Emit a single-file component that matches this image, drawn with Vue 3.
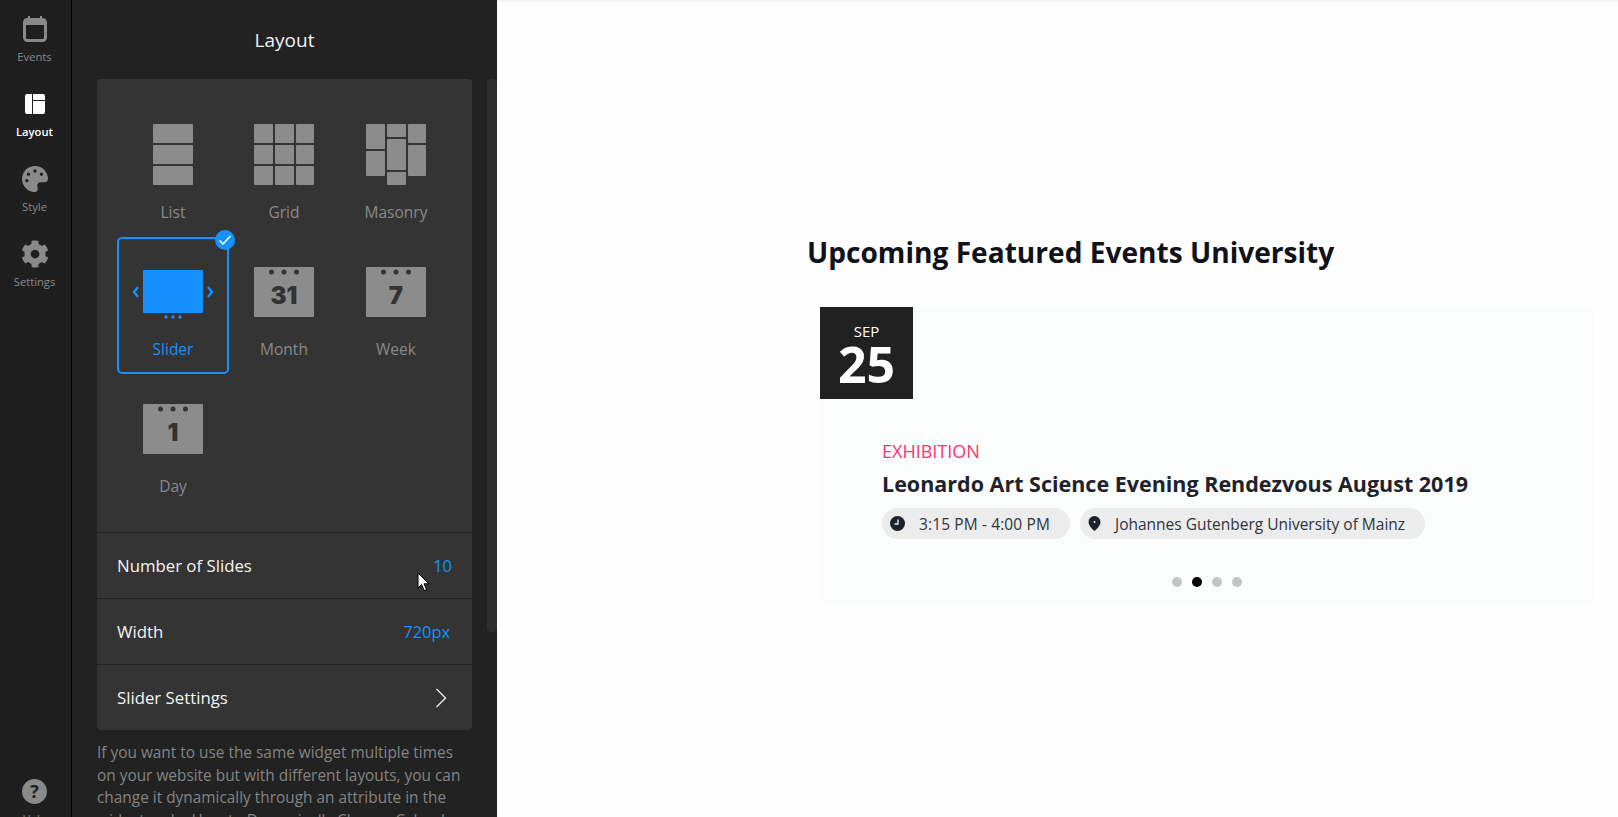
<template>
  <div class="app">
    <aside class="sidebar">
      <div v-for="item in navItems" :key="item.label" class="nav-item" :class="{ active: item.active }">
        <span class="nav-icon">
          <svg v-if="item.icon === 'events'" width="24" height="26" viewBox="0 0 24 26">
            <path d="M5 0h2v4H5zM17 0h2v4h-2z" fill="#8a8a8a" />
            <rect x="1.5" y="3.5" width="21" height="21" rx="3" fill="none" stroke="#8a8a8a" stroke-width="3" />
            <rect x="1" y="3" width="22" height="6" rx="2" fill="#8a8a8a" />
          </svg>
          <svg v-else-if="item.icon === 'layout'" width="20" height="20" viewBox="0 0 20 20">
            <path d="M2 0h5v20H2a2 2 0 0 1-2-2V2a2 2 0 0 1 2-2zM8 0h10a2 2 0 0 1 2 2v4H8zM8 7h12v11a2 2 0 0 1-2 2H8z" fill="#fff" />
          </svg>
          <svg v-else-if="item.icon === 'style'" width="26" height="26" viewBox="0 0 512 512">
            <path fill="#8a8a8a" d="M204.3 5C104.9 24.4 24.8 104.3 5.2 203.4c-37 187 131.7 326.4 258.8 306.7 41.2-6.4 61.4-54.6 42.5-91.7-23.1-45.4 9.9-98.4 60.9-98.4h79.7c35.8 0 64.8-29.6 64.9-65.3C511.5 97.1 368.1-26.9 204.3 5zM96 320c-17.7 0-32-14.3-32-32s14.3-32 32-32 32 14.3 32 32-14.3 32-32 32zm32-128c-17.7 0-32-14.3-32-32s14.3-32 32-32 32 14.3 32 32-14.3 32-32 32zm128-64c-17.7 0-32-14.3-32-32s14.3-32 32-32 32 14.3 32 32-14.3 32-32 32zm128 64c-17.7 0-32-14.3-32-32s14.3-32 32-32 32 14.3 32 32-14.3 32-32 32z" />
          </svg>
          <svg v-else-if="item.icon === 'settings'" width="28" height="28" viewBox="0 0 512 512">
            <path fill="#8a8a8a" d="M487.4 315.7l-42.6-24.6c4.3-23.2 4.3-47 0-70.2l42.6-24.6c4.9-2.8 7.1-8.6 5.5-14-11.1-35.6-30-67.8-54.7-94.6-3.8-4.1-10-5.1-14.8-2.3L380.8 110c-17.9-15.4-38.5-27.3-60.8-35.1V25.8c0-5.6-3.9-10.5-9.4-11.7-36.7-8.2-74.3-7.8-109.2 0-5.5 1.2-9.4 6.1-9.4 11.7V75c-22.2 7.9-42.8 19.8-60.8 35.1L88.7 85.5c-4.9-2.8-11-1.9-14.8 2.3-24.7 26.7-43.6 58.9-54.7 94.6-1.7 5.4.6 11.2 5.5 14L67.3 221c-4.3 23.2-4.3 47 0 70.2l-42.6 24.6c-4.9 2.8-7.1 8.6-5.5 14 11.1 35.6 30 67.8 54.7 94.6 3.8 4.1 10 5.1 14.8 2.3l42.6-24.6c17.9 15.4 38.5 27.3 60.8 35.1v49.2c0 5.6 3.9 10.5 9.4 11.7 36.7 8.2 74.3 7.8 109.2 0 5.5-1.2 9.4-6.1 9.4-11.7v-49.2c22.2-7.9 42.8-19.8 60.8-35.1l42.6 24.6c4.9 2.8 11 1.9 14.8-2.3 24.7-26.7 43.6-58.9 54.7-94.6 1.5-5.5-.7-11.3-5.6-14.1zM256 336c-44.1 0-80-35.9-80-80s35.9-80 80-80 80 35.9 80 80-35.9 80-80 80z" />
          </svg>
        </span>
        <span class="nav-label">{{ item.label }}</span>
      </div>
      <div class="nav-item help">
        <span class="nav-icon">
          <span class="help-circle">?</span>
        </span>
        <span class="nav-label">Help</span>
      </div>
    </aside>

    <section class="panel">
      <h2 class="panel-title">Layout</h2>
      <div class="card">
        <div class="layout-grid">
          <div v-for="layout in layouts" :key="layout.name" class="layout-cell" :class="{ selected: layout.selected }">
            <span v-if="layout.selected" class="check">
              <svg width="14" height="12" viewBox="0 0 14 12">
                <path d="M1.500 6.500l3.500 3.500 7.500-8" fill="none" stroke="#fff" stroke-width="1.500" />
              </svg>
            </span>
            <div class="layout-icon">
              <svg v-if="layout.name === 'List'" width="40" height="61" viewBox="0 0 40 61">
                <g fill="#8c8c8c">
                  <rect width="40" height="19" rx="1" />
                  <rect y="21" width="40" height="19" rx="1" />
                  <rect y="42" width="40" height="19" rx="1" />
                </g>
              </svg>
              <svg v-else-if="layout.name === 'Grid'" width="60" height="61" viewBox="0 0 60 61">
                <g fill="#8c8c8c">
                  <template v-for="row in 3" :key="row">
                    <rect :y="(row - 1) * 21" width="19" height="19" rx="1" />
                    <rect x="21" :y="(row - 1) * 21" width="19" height="19" rx="1" />
                    <rect x="42" :y="(row - 1) * 21" width="18" height="19" rx="1" />
                  </template>
                </g>
              </svg>
              <svg v-else-if="layout.name === 'Masonry'" width="60" height="61" viewBox="0 0 60 61">
                <g fill="#8c8c8c">
                  <rect width="19" height="25" rx="1" />
                  <rect y="27" width="19" height="25" rx="1" />
                  <rect x="21" width="19" height="13" rx="1" />
                  <rect x="21" y="15" width="19" height="31" rx="1" />
                  <rect x="21" y="48" width="19" height="13" rx="1" />
                  <rect x="42" width="18" height="19" rx="1" />
                  <rect x="42" y="21" width="18" height="31" rx="1" />
                </g>
              </svg>
              <svg v-else-if="layout.name === 'Slider'" class="slider-icon" width="82" height="49" viewBox="0 0 82 49">
                <g fill="#1592ff">
                  <rect x="11" width="60" height="43" rx="1" />
                  <circle cx="34" cy="47" r="1.700" />
                  <circle cx="41" cy="47" r="1.700" />
                  <circle cx="48" cy="47" r="1.700" />
                </g>
                <path d="M6 17l-4 5 4 5M76 17l4 5-4 5" fill="none" stroke="#1592ff" stroke-width="2.400" />
              </svg>
              <svg v-else width="60" height="50" viewBox="0 0 60 50">
                <rect width="60" height="50" rx="1" fill="#8c8c8c" />
                <g fill="#333">
                  <circle cx="17.500" cy="5" r="2.500" />
                  <circle cx="30" cy="5" r="2.500" />
                  <circle cx="42.500" cy="5" r="2.500" />
                </g>
                <text class="cal-text" x="30" y="37" text-anchor="middle">{{ layout.day }}</text>
              </svg>
            </div>
            <span class="layout-name">{{ layout.name }}</span>
          </div>
        </div>

        <div class="row">
          <span>Number of Slides</span>
          <span class="row-value">10</span>
        </div>
        <div class="row">
          <span>Width</span>
          <span class="row-value width-value">720px</span>
        </div>
        <div class="row">
          <span>Slider Settings</span>
          <svg class="chevron" width="12" height="20" viewBox="0 0 12 20">
            <path d="M1.500 1l9 9-9 9" fill="none" stroke="#e8e8e8" stroke-width="1.400" />
          </svg>
        </div>
      </div>
      <p class="hint">
        If you want to use the same widget multiple times<br />
        on your website but with different layouts, you can<br />
        change it dynamically through an attribute in the<br />
        widget code. How to Dynamically Change Calendar
      </p>
      <div class="scrollbar"></div>
      <svg class="cursor" width="13" height="20" viewBox="0 0 13 20">
        <path d="M1 1v15l3.600-3.400 2.600 6 2.400-1-2.600-5.800H12z" fill="#fff" stroke="#000" stroke-width="1" />
      </svg>
    </section>

    <main class="preview">
      <h1 class="widget-title">Upcoming Featured Events University</h1>
      <div class="event">
        <div class="date">
          <span class="month">SEP</span>
          <span class="day">25</span>
        </div>
        <div class="event-body">
          <div class="category">EXHIBITION</div>
          <div class="event-name">Leonardo Art Science Evening Rendezvous August 2019</div>
          <div class="chips">
            <span class="chip time">
              <svg width="15" height="15" viewBox="0 0 15 15">
                <circle cx="7.500" cy="7.500" r="7.500" fill="#1e222b" />
                <path d="M8 3.500V8H4.500" fill="none" stroke="#ececec" stroke-width="1.400" />
              </svg>
              3:15 PM - 4:00 PM
            </span>
            <span class="chip">
              <svg width="13" height="15" viewBox="0 0 13 15">
                <path fill-rule="evenodd" d="M6.500 0a6 6 0 0 1 6 6c0 3.600-3.500 6.800-6 9-2.500-2.200-6-5.400-6-9a6 6 0 0 1 6-6zm0 5a1 1 0 1 0 0 2 1 1 0 0 0 0-2z" fill="#1e222b" />
              </svg>
              Johannes Gutenberg University of Mainz
            </span>
          </div>
        </div>
        <div class="dots">
          <span v-for="n in 4" :key="n" class="dot" :class="{ current: n === 2 }"></span>
        </div>
      </div>
    </main>
  </div>
</template>

<script setup>
const navItems = [
  { label: 'Events', icon: 'events' },
  { label: 'Layout', icon: 'layout', active: true },
  { label: 'Style', icon: 'style' },
  { label: 'Settings', icon: 'settings' },
]

const layouts = [
  { name: 'List' },
  { name: 'Grid' },
  { name: 'Masonry' },
  { name: 'Slider', selected: true },
  { name: 'Month', day: '31' },
  { name: 'Week', day: '7' },
  { name: 'Day', day: '1' },
]
</script>

<style>
html,
body {
  margin: 0;
  height: 100%;
  overflow: hidden;
  background: #fff;
}
</style>

<style scoped>
.app {
  display: flex;
  width: 1618px;
  height: 817px;
  overflow: hidden;
  font-family: 'Open Sans', 'Noto Sans', sans-serif;
}

.sidebar {
  box-sizing: border-box;
  width: 72px;
  flex: none;
  padding: 14px 2px 0 0;
  background: #1f1f1f;
  border-right: 1px solid #000;
}

.nav-item {
  display: flex;
  flex-direction: column;
  align-items: center;
  height: 75px;
  color: #8a8a8a;
}

.nav-item.active {
  color: #fff;
  font-weight: 600;
}

.nav-item.help {
  margin-top: 462px;
}

.nav-icon {
  display: flex;
  align-items: center;
  justify-content: center;
  height: 30px;
}

.nav-label {
  margin-top: 6px;
  font-size: 11.2px;
  line-height: 14px;
}

.help-circle {
  display: flex;
  align-items: center;
  justify-content: center;
  width: 25px;
  height: 25px;
  border-radius: 50%;
  background: #8a8a8a;
  color: #1f1f1f;
  font-size: 18px;
  font-weight: 700;
}

.panel {
  position: relative;
  box-sizing: border-box;
  width: 425px;
  flex: none;
  padding: 0 25px;
  background: #222;
}

.panel-title {
  display: flex;
  align-items: center;
  justify-content: center;
  height: 79px;
  margin: 0;
  color: #f2f2f2;
  font-size: 19px;
  font-weight: 400;
}

.card {
  width: 375px;
  border-radius: 4px;
  background: #343434;
}

.layout-grid {
  display: grid;
  grid-template-columns: 112px 110px 114px;
  grid-auto-rows: 137px;
  padding: 21px 19px 21px 20px;
}

.layout-cell {
  position: relative;
  box-sizing: border-box;
  display: flex;
  flex-direction: column;
  align-items: center;
  border: 2px solid transparent;
  border-radius: 5px;
  color: #8a8a8a;
}

.layout-cell.selected {
  border-color: #1592ff;
  color: #1592ff;
}

.check {
  position: absolute;
  top: -9px;
  right: -8px;
  display: flex;
  align-items: center;
  justify-content: center;
  width: 20px;
  height: 20px;
  border-radius: 50%;
  background: #1592ff;
}

.layout-icon {
  display: flex;
  align-items: center;
  justify-content: center;
  height: 61px;
  margin-top: 22px;
}

.slider-icon {
  margin-top: 6px;
}

.cal-text {
  fill: #333;
  font-family: Inter, sans-serif;
  font-size: 24px;
  font-weight: 900;
}

.layout-name {
  margin-top: 17px;
  font-size: 15.5px;
  line-height: 20px;
}

.row {
  display: flex;
  align-items: center;
  justify-content: space-between;
  box-sizing: border-box;
  height: 66px;
  padding: 0 20px;
  border-top: 1px solid #232323;
  color: #f4f4f4;
  font-size: 16.8px;
}

.row-value {
  color: #1592ff;
  font-size: 16.4px;
}

.width-value {
  margin-right: 2px;
}

.chevron {
  margin-right: 5px;
}

.hint {
  width: 375px;
  margin: 12px 0 0;
  color: #858585;
  font-size: 15.4px;
  line-height: 22.6px;
  white-space: nowrap;
}

.scrollbar {
  position: absolute;
  top: 79px;
  left: 415px;
  width: 10px;
  height: 553px;
  border-radius: 4px;
  background: #2e2e2e;
}

.cursor {
  position: absolute;
  top: 572px;
  left: 345px;
}

.preview {
  flex: 1;
  padding: 228px 0 0 310px;
  border-top: 2px solid #f4f4f4;
  background: #fefefe;
}

.widget-title {
  margin: 0 0 35px;
  color: #10121a;
  font-size: 28.1px;
  font-weight: 700;
  line-height: 44px;
}

.event {
  position: relative;
  box-sizing: border-box;
  width: 773px;
  height: 294px;
  margin-left: 14px;
  padding: 128px 61px 0;
  background: #fbfcfc;
}

.date {
  position: absolute;
  top: -2px;
  left: -1px;
  display: flex;
  flex-direction: column;
  align-items: center;
  width: 93px;
  height: 92px;
  background: #212121;
  color: #fff;
}

.month {
  margin-top: 14px;
  font-size: 15px;
  line-height: 20px;
}

.day {
  font-size: 50px;
  font-weight: 700;
  line-height: 46px;
}

.category {
  color: #f5386f;
  font-size: 18px;
  line-height: 28px;
}

.event-name {
  margin-top: 3px;
  color: #1e222b;
  font-size: 21.5px;
  font-weight: 700;
  line-height: 32px;
}

.chips {
  display: flex;
  gap: 10px;
  margin-top: 8px;
}

.chip {
  display: flex;
  align-items: center;
  gap: 14px;
  height: 31px;
  padding: 0 20px 0 8px;
  border-radius: 16px;
  background: #ececec;
  color: #30343c;
  font-size: 15.5px;
}

.chip.time {
  letter-spacing: 0.12px;
}

.dots {
  position: absolute;
  left: 351px;
  bottom: 16px;
  display: flex;
  gap: 10px;
}

.dot {
  width: 10px;
  height: 10px;
  border-radius: 50%;
  background: #c4c4c4;
}

.dot.current {
  background: #000;
}
</style>
